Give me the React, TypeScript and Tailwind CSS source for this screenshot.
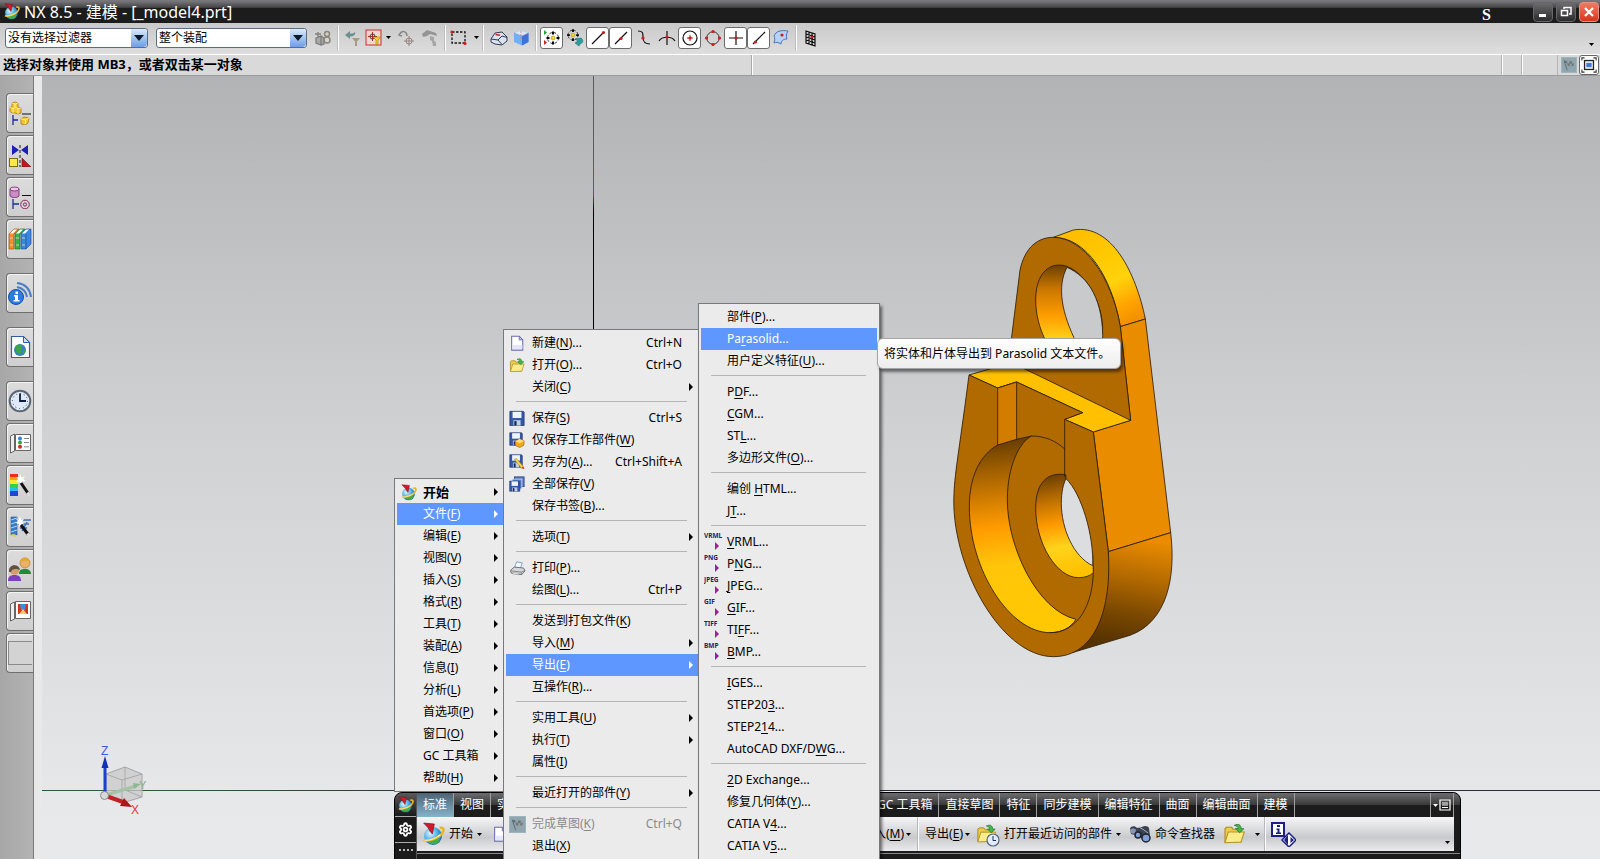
import React from "react";
import { Settings } from "lucide-react";

type Svg = { size?: number; children: React.ReactNode; box?: string };

function Ico({ size = 18, box = "0 0 18 18", children }: Svg) {
  return (
    <svg width={size} height={size} viewBox={box} fill="none" aria-hidden="true" className="shrink-0">
      {children}
    </svg>
  );
}

/* ---------- shared icons ---------- */

function NxLogo({ size = 18 }: { size?: number }) {
  return (
    <Ico size={size}>
      <defs>
        <radialGradient id="nxBall" cx="0.35" cy="0.35" r="0.75">
          <stop offset="0" stopColor="#e4f8ff" />
          <stop offset="0.5" stopColor="#4fb4e6" />
          <stop offset="1" stopColor="#15579f" />
        </radialGradient>
      </defs>
      <circle cx="9" cy="10.500" r="6.700" fill="url(#nxBall)" />
      <path d="M4.500 14.500c2.500 2.500 6 3 8.500 1l1.500-3-4 .3z" fill="#3cae49" />
      <path d="M2 13.500C6 15 15.500 11.500 16.800 6.500c.5-2-1-2.500-2.800-2" stroke="#e9b424" strokeWidth="1.800" />
      <path d="M2.500 13.500C6 14.300 12 12 14.500 9.500" stroke="#fff3b0" strokeWidth=".8" />
      <path d="M2 .8l8 .7-1.500 7.500L6.800 7 5.500 4.500z" fill="#cf1a2c" stroke="#7c0c18" strokeWidth=".5" />
    </Ico>
  );
}

function FolderIcon({ size = 18 }: { size?: number }) {
  return (
    <Ico size={size}>
      <path d="M1.500 15V5l1-1h4l1 1.500h6V15z" fill="#eccb4a" stroke="#a98a20" strokeWidth=".8" />
      <path d="M1.500 15.500l2.500-8h12l-2.500 7.500z" fill="#fbec8a" stroke="#b3942a" strokeWidth=".8" />
      <path d="M8.500 2.500c3-1.500 5-.5 5.200 2.500h2L12.500 8 9.300 5h2c0-1.500-1-2-2.800-2.500z" fill="#46b64a" stroke="#1f7a2c" strokeWidth=".6" />
    </Ico>
  );
}

function Floppy({ extra }: { extra?: "cube" | "pen" | "stack" }) {
  return (
    <Ico size={16}>
      {extra === "stack" && (
        <>
          <rect x="6" y="1" width="11" height="11" fill="#5b7ec4" stroke="#1d2f6b" strokeWidth=".8" />
          <rect x="3.500" y="3.500" width="11" height="11" fill="#5b7ec4" stroke="#dfe6f7" strokeWidth=".8" />
        </>
      )}
      <g transform={extra === "stack" ? "translate(0 5) scale(.72)" : extra ? "scale(.88)" : "translate(0 .5)"}>
        <path d="M1 1h15l1 1v15H1z" fill="#3558a8" stroke="#1b2f66" strokeWidth=".8" />
        <rect x="4" y="1.500" width="10" height="7" fill="#eef4fb" />
        <rect x="5" y="11" width="8" height="6" fill="#c3d0e4" />
        <rect x="6" y="12" width="2.500" height="5" fill="#14275c" />
      </g>
      {extra === "cube" && (
        <>
          <path d="M7 10.500l5-2.500 5 2-.3 5L12 17.500 7 15z" fill="#f6a81c" stroke="#9a6208" strokeWidth=".7" />
          <path d="M7 10.500l5-2.500 5 2-5 2.500z" fill="#ffe17a" />
        </>
      )}
      {extra === "pen" && (
        <>
          <path d="M6 6l2.500-.8L16 14l-2 2z" fill="#ffd93b" stroke="#a57c0e" strokeWidth=".6" />
          <path d="M14 16l2-2 1.500 3z" fill="#d32b1e" />
        </>
      )}
    </Ico>
  );
}

function FlagIcon({ size = 17 }: { size?: number }) {
  return (
    <Ico size={size}>
      <rect x=".5" y=".5" width="17" height="17" fill="#8fa6b0" stroke="#9fb3bb" />
      <path d="M3.500 4l9 1 2.500-1-1 7-2.500 1-6-1z" fill="#96a1a6" />
      <path d="M3.500 4l3 .4.6 2.500-3-.3zM9.500 4.800l3 .2-.3 2.700-2.500-.3zM7 7l2.700.4.2 2.600-2.400-.3zM12.200 7.700l2.300-.7-.4 2.500-2.200.8z" fill="#66737a" />
      <path d="M3.500 4L7 15" stroke="#5a676e" />
    </Ico>
  );
}

function NewDoc() {
  return (
    <Ico size={16}>
      <path d="M3 1.500h8.500l4 4V17H3z" fill="#fff" stroke="#6a6ab4" strokeWidth="1.200" />
      <path d="M11.500 1.500v4h4z" fill="#c9c9ee" stroke="#6a6ab4" />
      <path d="M4 11h11v5H4z" fill="#e4e6fb" />
    </Ico>
  );
}

function Printer() {
  return (
    <Ico size={17}>
      <path d="M6 8l2-6 6 1-2 6z" fill="#f3f9ff" stroke="#5c8db8" strokeWidth=".8" />
      <path d="M1.500 11l4-3.500 10 1 1.500 3-3.500 4-11-1.500z" fill="#d5d7da" stroke="#5f6266" strokeWidth=".9" />
      <path d="M2 11.500l11 1.300 3.500-1.600M13 13v2.500" stroke="#6c6f73" strokeWidth=".8" />
      <path d="M4 13.300l7 .9-.5 1.500-6.500-.9z" fill="#fff" stroke="#777" strokeWidth=".5" />
    </Ico>
  );
}

function Caret({ white }: { white?: boolean }) {
  return (
    <svg width="5" height="3" viewBox="0 0 5 3" aria-hidden="true" className="shrink-0">
      <path d="M0 0h5L2.500 3z" fill={white ? "#fff" : "#000"} />
    </svg>
  );
}

/* ---------- menus ---------- */

type Entry =
  | null
  | { t: string; k?: string; sub?: boolean; on?: boolean; icon?: React.ReactNode; bold?: boolean; off?: boolean };

function Label({ t }: { t: string }) {
  const i = t.indexOf("&");
  if (i < 0) return <span>{t}</span>;
  return (
    <span>
      {t.slice(0, i)}
      <u className="underline-offset-2">{t[i + 1]}</u>
      {t.slice(i + 2)}
    </span>
  );
}

function Menu({ items, label, className }: { items: Entry[]; label: string; className: string }) {
  return (
    <div
      role="menu"
      aria-label={label}
      className={`absolute border border-[#77797d] bg-[#ebebeb] py-0.5 pl-0.5 text-xs leading-[22px] text-black ${className}`}
    >
      {items.map((it, i) =>
        it === null ? (
          <div key={i} role="separator" className="mr-[11px] ml-2.5 h-[9px] pt-[3px]">
            <div className="h-px bg-[#b4b4b4]" />
          </div>
        ) : (
          <button
            key={i}
            role="menuitem"
            type="button"
            disabled={it.off}
            className={`flex h-[22px] w-full items-center text-left whitespace-nowrap ${
              it.on ? "bg-[#5e97ff] text-white" : it.off ? "text-[#8a8a8a]" : ""
            }`}
          >
            <span className="flex w-[26px] shrink-0 items-center pl-[3px]">{it.icon}</span>
            <span className={`flex-1 ${it.bold ? "text-[13px] font-bold" : ""}`}>
              <Label t={it.t} />
            </span>
            {it.k && <span className="mr-4">{it.k}</span>}
            {it.sub && (
              <svg width="4" height="8" viewBox="0 0 4 8" className="mr-[5px]" aria-hidden="true">
                <path d="M0 0l4 4-4 4z" fill={it.on ? "#fff" : "#000"} />
              </svg>
            )}
          </button>
        ),
      )}
    </div>
  );
}

function FmtIcon({ t }: { t: string }) {
  return (
    <svg width="20" height="20" viewBox="0 0 20 20" className="shrink-0" aria-hidden="true">
      <text x="0" y="6" fontSize="6.500" fontWeight="700" fill="#251c70">
        {t}
      </text>
      <path d="M11 10l4 4-4 4z" fill="#9c1f98" />
    </svg>
  );
}

const mainMenu: Entry[] = [
  { t: "开始", sub: true, bold: true, icon: <NxLogo size={17} /> },
  { t: "文件(&F)", sub: true, on: true },
  { t: "编辑(&E)", sub: true },
  { t: "视图(&V)", sub: true },
  { t: "插入(&S)", sub: true },
  { t: "格式(&R)", sub: true },
  { t: "工具(&T)", sub: true },
  { t: "装配(&A)", sub: true },
  { t: "信息(&I)", sub: true },
  { t: "分析(&L)", sub: true },
  { t: "首选项(&P)", sub: true },
  { t: "窗口(&O)", sub: true },
  { t: "GC 工具箱", sub: true },
  { t: "帮助(&H)", sub: true },
];

const fileMenu: Entry[] = [
  { t: "新建(&N)...", k: "Ctrl+N", icon: <NewDoc /> },
  { t: "打开(&O)...", k: "Ctrl+O", icon: <FolderIcon size={17} /> },
  { t: "关闭(&C)", sub: true },
  null,
  { t: "保存(&S)", k: "Ctrl+S", icon: <Floppy /> },
  { t: "仅保存工作部件(&W)", icon: <Floppy extra="cube" /> },
  { t: "另存为(&A)...", k: "Ctrl+Shift+A", icon: <Floppy extra="pen" /> },
  { t: "全部保存(&V)", icon: <Floppy extra="stack" /> },
  { t: "保存书签(&B)..." },
  null,
  { t: "选项(&T)", sub: true },
  null,
  { t: "打印(&P)...", icon: <Printer /> },
  { t: "绘图(&L)...", k: "Ctrl+P" },
  null,
  { t: "发送到打包文件(&K)" },
  { t: "导入(&M)", sub: true },
  { t: "导出(&E)", sub: true, on: true },
  { t: "互操作(&R)..." },
  null,
  { t: "实用工具(&U)", sub: true },
  { t: "执行(&T)", sub: true },
  { t: "属性(&I)" },
  null,
  { t: "最近打开的部件(&Y)", sub: true },
  null,
  { t: "完成草图(&K)", k: "Ctrl+Q", off: true, icon: <FlagIcon /> },
  { t: "退出(&X)" },
];

const exportMenu: Entry[] = [
  { t: "部件(&P)..." },
  { t: "Pa&rasolid...", on: true },
  { t: "用户定义特征(&U)..." },
  null,
  { t: "P&DF..." },
  { t: "&CGM..." },
  { t: "ST&L..." },
  { t: "多边形文件(&O)..." },
  null,
  { t: "编创 &HTML..." },
  { t: "J&T..." },
  null,
  { t: "&VRML...", icon: <FmtIcon t="VRML" /> },
  { t: "P&NG...", icon: <FmtIcon t="PNG" /> },
  { t: "&JPEG...", icon: <FmtIcon t="JPEG" /> },
  { t: "&GIF...", icon: <FmtIcon t="GIF" /> },
  { t: "TI&FF...", icon: <FmtIcon t="TIFF" /> },
  { t: "&BMP...", icon: <FmtIcon t="BMP" /> },
  null,
  { t: "&IGES..." },
  { t: "STEP20&3..." },
  { t: "STEP2&14..." },
  { t: "AutoCAD DXF/D&WG..." },
  null,
  { t: "&2D Exchange..." },
  { t: "修复几何体(&Y)..." },
  { t: "CATIA V&4..." },
  { t: "CATIA V&5..." },
];

/* ---------- title bar and toolbars ---------- */

function TitleBar() {
  return (
    <header className="flex h-[23px] shrink-0 items-center bg-linear-to-b from-[#77777b] from-5% via-[#454548] via-32% to-[#1c1c1c] to-36% pl-[3px] text-white">
      <NxLogo size={17} />
      <h1 className="ml-1 flex-1 text-base leading-[22px]">NX 8.5 - 建模 - [_model4.prt]</h1>
      <span className="mt-1.5 mr-[42px] font-['Liberation_Serif',serif] text-base leading-none font-bold">S</span>
      <div className="flex gap-[3px] pr-px">
        <button type="button" aria-label="最小化" className="flex h-5 w-5 items-center justify-center rounded-sm border border-[#66666a] bg-linear-to-b from-[#6d6d70] to-[#2c2c2e]">
          <Ico size={14} box="0 0 14 14"><path d="M3 9h7v3H3z" fill="#fff" /></Ico>
        </button>
        <button type="button" aria-label="还原" className="flex h-5 w-5 items-center justify-center rounded-sm border border-[#66666a] bg-linear-to-b from-[#6d6d70] to-[#2c2c2e]">
          <Ico size={14} box="0 0 14 14"><path d="M5 4V2.500h7V9h-2M2.500 5.500h6v5h-6z" stroke="#fff" strokeWidth="1.500" /></Ico>
        </button>
        <button type="button" aria-label="关闭" className="flex h-5 w-5 items-center justify-center rounded-sm border border-[#e8927e] bg-linear-to-b from-[#ee7b62] to-[#d8321a]">
          <Ico size={14} box="0 0 14 14"><path d="M3 3l8 8M11 3l-8 8" stroke="#fff" strokeWidth="2.200" /></Ico>
        </button>
      </div>
    </header>
  );
}

function Combo({ value, label, className }: { value: string; label: string; className: string }) {
  return (
    <div className={`relative h-5 ${className}`}>
      <select aria-label={label} className="block h-full w-full appearance-none rounded-[3px] border border-[#5c6d80] bg-white pl-0.5 text-xs leading-[18px] text-black">
        <option>{value}</option>
      </select>
      <span className="pointer-events-none absolute top-px right-px bottom-px flex w-4 items-center justify-center rounded-r-sm bg-linear-to-b from-[#dbe9fb] to-[#6a9fe6]">
        <svg width="10" height="6" viewBox="0 0 10 6" aria-hidden="true"><path d="M0 0h10L5 6z" fill="#0e1a2c" /></svg>
      </span>
    </div>
  );
}

function Sep() {
  return <div className="mx-[3px] h-[26px] w-0.5 shrink-0 border-l border-[#bdbdbd] bg-white" />;
}

function Tool({ label, boxed, w, children }: { label: string; boxed?: boolean; w?: string; children: React.ReactNode }) {
  return (
    <button
      type="button"
      aria-label={label}
      className={`flex h-[22px] shrink-0 items-center justify-center ${w ?? "w-[23px]"} ${
        boxed ? "rounded-[3px] border border-[#6c6c6c] bg-white" : ""
      }`}
    >
      {children}
    </button>
  );
}

function Dots({ pts }: { pts: number[][] }) {
  return (
    <>
      {pts.map(([x, y]) => (
        <circle key={`${x}-${y}`} cx={x} cy={y} r="1.600" fill="#cc1c1c" />
      ))}
    </>
  );
}

function Flower() {
  return (
    <>
      <circle cx="10" cy="9" r="5.500" stroke="#222" strokeDasharray="2.500 1.800" />
      <path d="M10 2.500v3M10 12.500v3M3.500 9h3M13.500 9h3" stroke="#000" strokeWidth="2" />
      <circle cx="10" cy="9" r="2" fill="#f5d728" stroke="#a88d0c" strokeWidth=".6" />
    </>
  );
}

function Toolbar() {
  return (
    <div className="flex h-[31px] shrink-0 items-center bg-linear-to-b from-[#c9c9c9] to-[#dedede] pb-0.5 pl-[5px]">
      <Combo value="没有选择过滤器" label="类型过滤器" className="mr-2 w-[143px]" />
      <Combo value="整个装配" label="选择范围" className="mr-1 w-[151px]" />
      <Tool label="装配过滤">
        <Ico>
          <path d="M2 9l5-2v9l-5-2zM7 7l3 2v6l-3 1M4 3v5M1 5h6" stroke="#7d7d7d" strokeWidth="1.300" fill="#a8a8a8" />
          <circle cx="13" cy="5" r="2.500" stroke="#8b8675" strokeWidth="1.500" />
          <circle cx="13" cy="11" r="3" stroke="#8b8675" strokeWidth="1.500" />
        </Ico>
      </Tool>
      <Sep />
      <Tool label="重置过滤器" w="w-[22px]">
        <Ico>
          <path d="M1 6l5-4v2.500c3 0 4 0 5-2 1 4-2 5-5 5V10z" fill="#6d9090" />
          <path d="M8 9h8l-3 3.500V17h-2v-4.500z" fill="#a39c80" />
        </Ico>
      </Tool>
      <Tool label="点过滤器" w="w-5">
        <Ico>
          <rect x="1" y="1" width="15" height="15" fill="#eed8cc" stroke="#cf2a2a" />
          <path d="M7.500 3v9M3 7.500h9" stroke="#b02828" />
          <circle cx="7.500" cy="7.500" r="2.500" stroke="#444" />
          <path d="M8 8h8l-3 3v4l-2 1v-5z" fill="#f7ce2d" stroke="#9f7c0b" strokeWidth=".6" />
        </Ico>
      </Tool>
      <span className="mr-1 ml-0.5"><Caret /></span>
      <Tool label="移动点">
        <Ico>
          <path d="M3 3l-2 3 3 1M2 5c2-4 7-3 7 2" stroke="#868686" strokeWidth="1.500" />
          <circle cx="11" cy="12" r="3" stroke="#968484" />
          <path d="M11 7v10M6 12h10" stroke="#968484" />
        </Ico>
      </Tool>
      <Tool label="锤子">
        <Ico>
          <path d="M1 5l5-4 9 3 1 3-3-1-4-1-3 2-4 1z" fill="#949494" />
          <path d="M9 7l4 1v4l2 1v4h-3l-1-5-2-1z" fill="#a5a5a5" />
        </Ico>
      </Tool>
      <Sep />
      <Tool label="矩形选择" w="w-5">
        <Ico>
          <rect x="2" y="3" width="13" height="11" stroke="#111" strokeWidth="1.300" strokeDasharray="2.500 1.500" />
          <Dots pts={[[2, 3], [15, 14.5]]} />
        </Ico>
      </Tool>
      <span className="ml-[5px]"><Caret /></span>
      <Sep />
      <Tool label="显示隐藏边">
        <Ico>
          <path d="M1 10l4-6 7-1 5 5v4l-5 4-7-1-4-2z" fill="#dbe2f0" stroke="#333a55" />
          <path d="M1 10l7 1 4 4.500M8 11l4-4 5 1.500" stroke="#333a55" />
          <path d="M5.500 5.500l4.500.8" stroke="#d32222" strokeWidth="1.500" />
        </Ico>
      </Tool>
      <Tool label="着色体" w="w-[22px]">
        <Ico>
          <path d="M2 4l7-2.500L16.500 4v9L10 16.500 2 13z" fill="#6fb0f6" />
          <path d="M2 4l7-2.500L16.500 4 10 7z" fill="#d6e8fc" />
          <path d="M10 7l6.500-3v9L10 16.500z" fill="#3a72e0" />
          <path d="M9 2v8M2 4l8 3 6.500-3" stroke="#d67a7a" strokeWidth=".8" strokeDasharray="2 1" />
        </Ico>
      </Tool>
      <Sep />
      <Tool label="启用捕捉" boxed>
        <Ico><Flower /><path d="M1 1l3 2.500-3 2.500z" fill="#1ea832" /><path d="M1 11l3 2.500-3 2.500z" fill="#d32121" /></Ico>
      </Tool>
      <Tool label="清除捕捉">
        <Ico>
          <g transform="translate(-2 -2) scale(.9)"><Flower /></g>
          <path d="M9 10l6-1c3 2 2 5-1 6l-1 2-4-3 3-2z" fill="#2c9c9c" stroke="#166" strokeWidth=".5" />
        </Ico>
      </Tool>
      <Tool label="端点" boxed>
        <Ico><path d="M3 15L14 4" stroke="#111" strokeWidth="1.200" /><Dots pts={[[14.5, 3.5]]} /></Ico>
      </Tool>
      <Tool label="中点" boxed>
        <Ico><path d="M3 15L15 3" stroke="#111" strokeWidth="1.200" /><Dots pts={[[9, 9.5]]} /></Ico>
      </Tool>
      <Tool label="控制点">
        <Ico><path d="M3 2c5 0 5 2 5 6s1 7 7 7" stroke="#111" strokeWidth="1.200" /><Dots pts={[[8, 9]]} /></Ico>
      </Tool>
      <Tool label="交点">
        <Ico><path d="M1 12c3-5 13-5 16 0M9 2v14" stroke="#111" strokeWidth="1.200" /><Dots pts={[[9, 8]]} /></Ico>
      </Tool>
      <Tool label="圆弧中心" boxed>
        <Ico><circle cx="9" cy="9" r="7" stroke="#111" strokeWidth="1.200" /><path d="M6 9h6M9 6v6" stroke="#cc1c1c" /><Dots pts={[[9, 9]]} /></Ico>
      </Tool>
      <Tool label="象限点">
        <Ico><circle cx="9" cy="9" r="6.200" stroke="#333" /><Dots pts={[[9, 2.5], [9, 15.5], [2.5, 9], [15.5, 9]]} /></Ico>
      </Tool>
      <Tool label="现有点" boxed>
        <Ico><path d="M9 2v14M2 9h14" stroke="#111" strokeWidth="1.200" /><Dots pts={[[9, 9]]} /></Ico>
      </Tool>
      <Tool label="曲线上的点" boxed>
        <Ico><path d="M3 15L15 3" stroke="#111" strokeWidth="1.200" /><Dots pts={[[5.5, 13]]} /></Ico>
      </Tool>
      <Tool label="面上的点" w="w-[22px]">
        <Ico>
          <path d="M2 7c2-5 7-6 14-5-2 3-2 5-1 8-4 0-6 2-6 5-3-2-5-2-7-1 1-3 1-5 0-7z" fill="#b5d3f8" stroke="#4676b8" />
          <Dots pts={[[10, 6]]} />
        </Ico>
      </Tool>
      <Sep />
      <Tool label="栅格点" w="w-[22px]">
        <Ico>
          <path d="M4 2l9 3v12l-9-3zM7 3v12M10 4v12M4 5l9 3M4 8l9 3M4 11l9 3" stroke="#111" strokeWidth="1.200" />
          <Dots pts={[[10, 8]]} />
        </Ico>
      </Tool>
      <span className="mt-3.5 mr-1.5 ml-auto"><Caret /></span>
    </div>
  );
}

function PromptBar() {
  return (
    <div className="flex h-[22px] shrink-0 items-stretch border-t border-b border-t-white border-b-[#9c9c9c] bg-[#d9d9d9] text-[13px] font-bold text-black">
      <p className="w-[47%] shrink-0 border-r border-[#a8a8a8] pl-[3px] leading-[18px]">选择对象并使用 MB3，或者双击某一对象</p>
      <div className="flex-1 border-r border-l border-r-[#b5b5b5] border-l-white" />
      <div className="w-5 border-r border-l border-r-[#b5b5b5] border-l-white" />
      <div className="w-9 border-r border-l border-r-[#b5b5b5] border-l-white" />
      <div className="flex items-center gap-0.5 pr-px pl-[3px]">
        <FlagIcon size={16} />
        <button type="button" aria-label="全屏" className="flex h-5 w-5 items-center justify-center rounded-[3px] border border-[#666] bg-white">
          <Ico size={16}>
            <path d="M1 4V1h3M14 1h3v3M1 14v3h3M17 14v3h-3" stroke="#333" strokeWidth="1.200" />
            <rect x="4" y="4" width="10" height="10" fill="#fff" stroke="#222" strokeWidth="1.500" />
            <rect x="6" y="6.500" width="6" height="5" fill="#3a7ad8" />
          </Ico>
        </button>
      </div>
    </div>
  );
}

/* ---------- resource rail ---------- */

const treeBlue = "#1e2a9c";

const rail: { label: string; gap?: boolean; icon: React.ReactNode }[] = [
  {
    label: "装配导航器",
    icon: (
      <>
        <path d="M4 2l3-1 3 1v4l3 1v5l-3 1-3-1-4-.5-1-1V6.500l2-1z" fill="#f5c52f" stroke="#a87c09" strokeWidth=".8" />
        <path d="M4 2l3 1.200L10 2M7 3.200V6M2 6.500l3 1 3-1 2 1.200L13 7M5 7.500V12M10 7.700V13" stroke="#fff3a0" strokeWidth=".9" />
        <path d="M5 14v10M5 19h5" stroke={treeBlue} strokeWidth="1.300" />
        <path d="M14 13h9" stroke="#111" />
        <path d="M13 18l3-2 5 1-1 5-3 2-4-1z" fill="#f5c52f" stroke="#a87c09" strokeWidth=".8" />
        <path d="M13 18l4.500.8 3.500-1.800M17.500 18.800V23" stroke="#fff3a0" strokeWidth=".9" />
      </>
    ),
  },
  {
    label: "约束导航器",
    icon: (
      <>
        <path d="M4 2l7 5-7 5zM20 2l-7 5 7 5z" fill="#1d1fb8" />
        <path d="M12 2v22" stroke="#111" strokeDasharray="3 2" />
        <rect x="1.500" y="15.500" width="8" height="8" fill="#ffe948" stroke="#7c6c0c" />
        <path d="M14 15l9 9h-9z" fill="#c5161d" stroke="#651014" strokeWidth=".6" />
      </>
    ),
  },
  {
    label: "部件导航器",
    icon: (
      <>
        <path d="M2 4v7c2 2 7 2 9 0V4z" fill="#cb8ec4" stroke="#7a2f72" strokeWidth=".9" />
        <ellipse cx="6.500" cy="4" rx="4.500" ry="2" fill="#ecc8e8" stroke="#7a2f72" strokeWidth=".9" />
        <path d="M5 14v10M5 19h6" stroke={treeBlue} strokeWidth="1.300" />
        <path d="M14 10.500h9" stroke="#111" strokeWidth="1.200" />
        <circle cx="17" cy="19.500" r="4.300" stroke="#8a2a62" />
        <circle cx="17" cy="19.500" r="1.600" stroke="#8a2a62" />
      </>
    ),
  },
  {
    label: "重用库",
    icon: (
      <>
        <path d="M1 7l5-5h5L6 7v15H1z" fill="#ef8f2c" stroke="#964c0a" strokeWidth=".6" />
        <path d="M7 7l5-5h5l-5 5v15H7z" fill="#37b34a" stroke="#136622" strokeWidth=".6" />
        <path d="M13 7l5-5h5v15l-5 5h-5z" fill="#3b86e0" stroke="#174b91" strokeWidth=".6" />
        <path d="M2 6.500l4-4h3L5 6.500zM8 6.500l4-4h3l-4 4zM14 6.500l4-4h3l-4 4z" fill="#fff" />
        <path d="M2 11h3M8 11h3M14 11h3M2 18h3M8 18h3M14 18h3" stroke="#f6dfa8" strokeWidth=".8" />
        <path d="M18 7v15" stroke="#174b91" strokeWidth=".6" />
      </>
    ),
  },
  {
    label: "HD3D 工具",
    gap: true,
    icon: (
      <>
        <path d="M9 2c8 1 13 6 14 14M9 6c5 1 9 4 10 10M10 10c3 1 4 3 5 6" stroke="#4a7ec8" strokeWidth="2" />
        <circle cx="8" cy="16" r="7.500" fill="#2b7de0" stroke="#1a4fa3" />
        <path d="M7.500 10.500h2.500v2.500H7.500zM6 14h4v5h1.500v1.500h-6V19H7v-3.500H6z" fill="#fff" />
      </>
    ),
  },
  {
    label: "浏览器",
    gap: true,
    icon: (
      <>
        <path d="M3.500 1.500h12l6 6v15h-18z" fill="#fff" stroke="#2d5fae" strokeWidth="1.200" />
        <path d="M15.500 1.500v6h6z" fill="#cfdff5" stroke="#2d5fae" />
        <circle cx="12" cy="15" r="6" fill="#3c7ec2" />
        <path d="M8 11c2-2 5-2 6 0s-2 3-1 5-2 4-3 3-4-5-2-8zM15 15l3-1-1 4-2 1z" fill="#3aa648" />
      </>
    ),
  },
  {
    label: "历史记录",
    gap: true,
    icon: (
      <>
        <circle cx="12" cy="12" r="10.300" fill="#dfe9f8" stroke="#5d6875" strokeWidth="2" />
        <circle cx="12" cy="12" r="7.500" stroke="#3c4654" strokeDasharray="1 2.900" />
        <path d="M12 4.500V12h6" stroke="#0d1c3c" strokeWidth="1.800" />
      </>
    ),
  },
  {
    label: "系统材料",
    icon: (
      <>
        <path d="M2.500 5l4-2v17l-4 2z" fill="#eee" stroke="#666" />
        <path d="M7.500 3.500h15v16h-15z" fill="#fff" stroke="#666" />
        <circle cx="12" cy="7.500" r="2" fill="#2f83e0" />
        <circle cx="12" cy="11.500" r="2" fill="#35a844" />
        <circle cx="12" cy="15.800" r="2" fill="#d82a20" />
        <path d="M16 7.500h5M16 11.500h5M16 15.800h5" stroke="#888" />
      </>
    ),
  },
  {
    label: "加工向导",
    icon: (
      <>
        <path d="M2 1h8v4H2z" fill="#f02c16" />
        <path d="M2 4h8v4H2z" fill="#fb9f13" />
        <path d="M2 7h8v4H2z" fill="#f5ee2d" />
        <path d="M2 11h8v4H2z" fill="#35d04a" />
        <path d="M2 15h8v4H2z" fill="#23bff0" />
        <path d="M2 18h8v5H2z" fill="#2440dd" />
        <path d="M12 1l1.500 3.500L17 3l-2 3 3 2-4 .5-1 3.500-1.500-3.500L8 9l2-3-2-2 3.500.5z" fill="#fff" />
        <path d="M13 10l7.500 11" stroke="#111" strokeWidth="3" />
        <path d="M19.500 19.500l2 3" stroke="#ddd" strokeWidth="3" />
      </>
    ),
  },
  {
    label: "分析向导",
    icon: (
      <>
        <path d="M3 2h6v18H3z" fill="#3a7cc4" stroke="#245189" strokeWidth=".6" />
        <path d="M9 5h14M10 9h11M12 13h7M14 16l5-9" stroke="#3f74b8" strokeWidth="1.500" />
        <path d="M3 5l6-2M3 9l6-2M3 13l6-2M3 17l6-2" stroke="#b8d4f4" />
        <path d="M1 20l5-1 4 2-3 1z" fill="#e0cf62" />
        <path d="M12 1l1 3.500 3-.5-2 3 2 2-3 .5-1 2.500-1.500-3L8 8l2-2-2-2 3 .5z" fill="#fff" />
        <path d="M13 10l7.500 10" stroke="#111" strokeWidth="3" />
        <path d="M19.500 18.500l2 3" stroke="#ddd" strokeWidth="3" />
      </>
    ),
  },
  {
    label: "角色",
    icon: (
      <>
        <path d="M11 17c0-4 2-5 6-5s6 2 6 5z" fill="#1e8a3a" />
        <circle cx="17" cy="6" r="5" fill="#eab268" stroke="#b87a2c" strokeWidth=".7" />
        <path d="M12 5c0-5 9-6 10 0-3-2-6-1-10 0z" fill="#e2a82a" />
        <path d="M0 24c0-4 2-6 6.500-6s6.500 2 6.500 6z" fill="#7d3fbf" />
        <circle cx="6.500" cy="13" r="4.800" fill="#d99a6c" />
        <path d="M1 15c-1-8 10-9 11-2l-3-1c-3 0-5 0-6 3z" fill="#5f5242" />
      </>
    ),
  },
  {
    label: "系统场景",
    icon: (
      <>
        <path d="M2.500 5l4-2v17l-4 2z" fill="#eee" stroke="#666" />
        <path d="M7.500 2.500h15v17h-15z" fill="#fff" stroke="#666" />
        <path d="M10 5h10v10H10z" fill="#d8301e" />
        <path d="M12 5h6l-1 6h-4z" fill="#3d8ae0" />
        <path d="M11 15l4-5 4 5z" fill="#f7c86c" />
      </>
    ),
  },
  { label: "空白", icon: <rect x=".5" y=".5" width="26" height="23" fill="#d3d3d3" stroke="#8a8a8a" /> },
];

function Rail() {
  return (
    <nav aria-label="资源条" className="flex w-[33px] shrink-0 flex-col gap-0.5 bg-linear-to-r from-[#a7a7a7] to-[#b3b3b3] pt-[17px] pl-1.5">
      {rail.map((r) => (
        <button
          key={r.label}
          type="button"
          aria-label={r.label}
          className={`flex h-10 w-full items-center overflow-hidden rounded-l-[4px] border border-r-0 border-[#6f6f6f] bg-linear-to-b from-[#dcdcdc] to-[#cfcfcf] pl-px shadow-[inset_1px_1px_0_#f4f4f4] ${
            r.gap ? "mt-3" : ""
          }`}
        >
          <Ico size={24} box="0 0 24 24">{r.icon}</Ico>
        </button>
      ))}
    </nav>
  );
}

/* ---------- graphics window ---------- */

function Part() {
  const edge = { stroke: "#2c1c06", strokeWidth: 2.5, strokeLinejoin: "round" as const };
  return (
    <svg width="270" height="460" viewBox="0 0 810 1380" className="absolute top-[134px] left-[888px]" role="img" aria-label="零件模型">
      <defs>
        <linearGradient id="lug" gradientUnits="userSpaceOnUse" x1="480" y1="60" x2="620" y2="340">
          <stop offset="0" stopColor="#ffbf00" />
          <stop offset="0.25" stopColor="#ffc800" />
          <stop offset="0.55" stopColor="#ffd20c" />
          <stop offset="0.8" stopColor="#ffa200" />
          <stop offset="1" stopColor="#ee8d00" />
        </linearGradient>
        <linearGradient id="foot" gradientUnits="userSpaceOnUse" x1="650" y1="990" x2="590" y2="1310">
          <stop offset="0" stopColor="#ea8b00" />
          <stop offset="0.35" stopColor="#b56b00" />
          <stop offset="0.7" stopColor="#7a4800" />
          <stop offset="1" stopColor="#553200" />
        </linearGradient>
        <linearGradient id="holeA" gradientUnits="userSpaceOnUse" x1="0" y1="165" x2="0" y2="400">
          <stop offset="0" stopColor="#6b4000" />
          <stop offset="0.3" stopColor="#c87600" />
          <stop offset="0.65" stopColor="#ff9d00" />
          <stop offset="0.95" stopColor="#ffd21a" />
        </linearGradient>
        <linearGradient id="bore" gradientUnits="userSpaceOnUse" x1="200" y1="680" x2="270" y2="1270">
          <stop offset="0" stopColor="#5f3900" />
          <stop offset="0.18" stopColor="#a56200" />
          <stop offset="0.45" stopColor="#ff9a00" />
          <stop offset="0.65" stopColor="#ffc60a" />
          <stop offset="1" stopColor="#ffc800" />
        </linearGradient>
        <linearGradient id="holeB" gradientUnits="userSpaceOnUse" x1="340" y1="790" x2="400" y2="1100">
          <stop offset="0" stopColor="#5f3900" />
          <stop offset="0.25" stopColor="#b86c00" />
          <stop offset="0.5" stopColor="#ff9a00" />
          <stop offset="0.72" stopColor="#ffd31c" />
          <stop offset="1" stopColor="#ffc000" />
        </linearGradient>
      </defs>
      <path d="M370 82L430 60C545 40 618 190 646 327L571 350C545 200 470 82 370 82Z" fill="url(#lug)" {...edge} />
      <path d="M571 350L646 327L722 968L535 1025L490 666L602 631Z" fill="#ea8c00" {...edge} />
      <path d="M535 1025L722 968C738 1100 712 1235 600 1276L430 1327L370 1330C500 1340 540 1180 535 1025Z" fill="url(#foot)" {...edge} />
      <path d="M270 180C285 110 325 82 370 82C460 82 545 200 571 350L602 631L230 500Z" fill="#b06a00" {...edge} />
      <path d="M388 165C345 165 317 205 317 270C317 350 360 440 410 460C480 460 518 430 518 350C512 250 445 165 388 165Z" fill="url(#holeA)" {...edge} />
      <path d="M411 172C475 200 522 270 518 400L440 400C395 310 380 230 411 172Z" fill="#c9cacc" {...edge} />
      <path d="M117 495L203 470H270L602 631L490 666L404 628L458 608L260 516L203 534Z" fill="#ffc000" {...edge} />
      <path d="M117 495L203 534L260 516L458 608L404 628L490 666L535 1025C545 1190 500 1340 370 1340C210 1340 60 1060 72 850C74 790 92 690 117 495Z" fill="#b06a00" {...edge} />
      <path d="M203 534L260 516V692L203 707Z" fill="#d27c00" {...edge} />
      <path d="M203 705C150 735 118 800 118 890C118 1080 240 1268 360 1268C395 1268 420 1255 438 1228C320 1200 232 1010 232 870C232 765 270 695 305 678L260 688Z" fill="url(#bore)" {...edge} />
      <path d="M305 678C342 678 378 692 404 717M360 1268C440 1268 492 1190 490 1070" {...edge} fill="none" />
      <path d="M407 794C350 785 317 820 317 895C317 1000 380 1103 445 1103C465 1103 480 1098 490 1088L488 1030L408 806Z" fill="url(#holeB)" {...edge} />
      <path d="M408 806C455 850 492 980 488 1067C430 1040 394 955 394 880C394 845 400 822 408 806Z" fill="#dcdddf" {...edge} />
      <path d="M404 628V800" {...edge} />
    </svg>
  );
}

function Triad() {
  return (
    <svg width="60" height="80" viewBox="0 -8 60 80" className="absolute bottom-[41px] left-[50px] font-['Liberation_Sans',sans-serif]" aria-hidden="true">
      <path d="M14 28l19-7 17 7v23l-20 6-16-7z" fill="#c9cacb" fillOpacity=".75" stroke="#a4a5a6" />
      <path d="M14 28l16 6v23M30 34l20-6M33 21v23l17 7M33 44l-19 6" stroke="#a9aaab" fill="none" />
      <path d="M14 49l30-9" stroke="#a3c4a5" strokeWidth="3" />
      <path d="M41 37l8 1-7 5z" fill="#8fb892" />
      <path d="M13 47V18" stroke="#1c3fd0" strokeWidth="3" />
      <path d="M9.500 22L13 10l3.500 12z" fill="#1230b8" />
      <path d="M14 50l17 6" stroke="#c02323" strokeWidth="4" />
      <path d="M32 52l8 9-12-1z" fill="#a81818" />
      <circle cx="12.500" cy="49.500" r="4" fill="#d9d9d9" stroke="#8c8c8c" />
      <text x="9" y="9" fontSize="12" fill="#3a5cf0">Z</text>
      <text x="47" y="43" fontSize="11" fill="#83b088">Y</text>
      <text x="39" y="68" fontSize="12" fill="#e03b3b">X</text>
    </svg>
  );
}

/* ---------- floating command dock ---------- */

function DockTab({ t, on }: { t: string; on?: boolean }) {
  return (
    <button
      type="button"
      role="tab"
      aria-selected={!!on}
      className={`h-full shrink-0 border-r border-[#a0a0a0] px-1.5 whitespace-nowrap ${
        on ? "bg-linear-to-b from-[#4d6374] to-[#86b4cb]" : ""
      }`}
    >
      {t}
    </button>
  );
}

function DockSep() {
  return <div className="h-full w-0.5 shrink-0 border-l border-[#b8b8bb] bg-white" />;
}

function Dock() {
  return (
    <section className="absolute top-[716px] left-[352px] flex h-[70px] w-[1067px] overflow-hidden rounded-t-lg border border-black bg-[#1b1b1b] text-xs text-white">
      <div className="flex w-[22px] shrink-0 flex-col border-r border-[#555]">
        <div className="flex h-6 items-center justify-center border-b border-[#aaa] bg-linear-to-b from-[#5a5a5a] to-[#1b1b1b]">
          <NxLogo size={17} />
        </div>
        <button type="button" aria-label="设置" className="flex h-[26px] items-center justify-center border-b border-[#aaa]">
          <Settings size={15} strokeWidth={3} color="#fff" />
        </button>
        <span className="flex justify-center gap-0.5 pt-1.5" aria-hidden="true">
          <i className="h-0.5 w-0.5 bg-[#bbb]" />
          <i className="h-0.5 w-0.5 bg-[#bbb]" />
          <i className="h-0.5 w-0.5 bg-[#bbb]" />
          <i className="h-0.5 w-0.5 bg-[#bbb]" />
        </span>
      </div>
      <div className="flex min-w-0 flex-1 flex-col">
        <div role="tablist" className="flex h-6 shrink-0 items-center bg-linear-to-b from-[#68686b] from-5% via-[#3b3b3c] via-48% to-[#1c1c1c] to-52% pr-1.5">
          <div className="flex h-full w-[454px] shrink-0 overflow-hidden">
            <DockTab t="标准" on />
            <DockTab t="视图" />
            <DockTab t="实用工具" />
          </div>
          <div className="flex h-full flex-1">
            {["GC 工具箱", "直接草图", "特征", "同步建模", "编辑特征", "曲面", "编辑曲面", "建模"].map((t) => (
              <DockTab key={t} t={t} />
            ))}
          </div>
          <button type="button" aria-label="选项卡菜单" className="flex h-full w-6 items-center justify-center gap-px border-x border-[#a0a0a0]">
            <Caret white />
            <Ico size={12} box="0 0 12 12"><path d="M1 1h10v10H1zM3 4h6M3 6h6M3 8.500h6" stroke="#fff" strokeWidth="1.200" /></Ico>
          </button>
        </div>
        <div className="mr-1.5 flex h-[34px] shrink-0 items-center bg-linear-to-b from-[#f6f6f8] via-[#c9cacd] via-60% to-[#ececef] text-black">
          <div className="flex w-[457px] shrink-0 items-center overflow-hidden pl-1">
            <NxLogo size={24} />
            <span className="mr-1 ml-1">开始</span>
            <Caret />
            <span className="ml-2.5"><NewDoc /></span>
          </div>
          <span className="mr-0.5"><Label t="入(&M)" /></span>
          <Caret />
          <span className="mr-1.5 ml-1.5 h-full"><DockSep /></span>
          <span className="mr-0.5"><Label t="导出(&E)" /></span>
          <Caret />
          <span className="relative ml-1.5">
            <FolderIcon size={22} />
            <span className="absolute top-2.5 left-2.5">
              <Ico size={14} box="0 0 14 14"><circle cx="7" cy="7" r="6" fill="#e3ecf8" stroke="#55657c" strokeWidth="1.200" /><path d="M7 3v4.500h3" stroke="#14306a" /></Ico>
            </span>
          </span>
          <span className="mr-1 ml-1.5">打开最近访问的部件</span>
          <Caret />
          <span className="ml-2">
            <Ico size={22} box="0 0 22 22">
              <path d="M1 6c0-3 5-4 7-1l5-1c3-2 6-1 7 1l1 8-2 4-4 1-3-3-1-5-5 2-4-1z" fill="#3b4250" />
              <path d="M1 7c1-2 5-2 6 0l-1 4-4-1z" fill="#8a97b4" />
              <circle cx="17" cy="15" r="4" fill="#7f9fd8" stroke="#20242e" strokeWidth="1.500" />
              <circle cx="9" cy="12" r="3" fill="#7f9fd8" stroke="#20242e" strokeWidth="1.500" />
              <path d="M10 4l5 3 4 3" stroke="#a8b2c8" />
            </Ico>
          </span>
          <span className="mr-2 ml-1">命令查找器</span>
          <FolderIcon size={24} />
          <span className="mr-1 ml-2"><Caret /></span>
          <span className="mr-[5px] h-full"><DockSep /></span>
          <Ico size={25} box="0 0 25 25">
            <rect x="1" y="1" width="12" height="13" fill="#fff" stroke="#1c1f86" strokeWidth="2" />
            <path d="M6 3h3v2H6zM5.500 6.500h3v4h1.500V12H5v-1.500h1.500V8h-1z" fill="#1c1f86" />
            <path d="M18 11l7 7-7 7-7-7z" fill="#fff" stroke="#1c1f86" strokeWidth="1.500" />
            <path d="M17 13v10l-4-5zM19.500 15l3.500 3-3.500 3z" fill="#1c1f86" />
          </Ico>
          <span className="mt-4 mr-1 ml-auto"><Caret /></span>
        </div>
        <div className="mt-0.5 h-px bg-[#888]" />
      </div>
    </section>
  );
}

function Canvas() {
  return (
    <main className="relative min-w-0 flex-1 overflow-hidden bg-linear-to-b from-[#b2b3b5] via-[#d0d1d3] via-45% to-[#e8e9ea] to-95%">
      <div className="absolute top-0 left-[551px] h-[259px] w-px bg-linear-to-b from-[#5c5c5c] from-33% via-[#a83a2e] via-46% to-black to-54%" />
      <div className="absolute top-[714px] right-0 left-0 h-px bg-linear-to-r from-[#2f5a35] from-10% to-[#2c2c38] to-30%" />
      <Triad />
      <Part />
      <Dock />
      <Menu label="菜单" items={mainMenu} className="top-[402px] left-[352px] w-[110px]" />
      <Menu label="文件" items={fileMenu} className="top-[253px] left-[461px] w-[196px]" />
      <Menu label="导出" items={exportMenu} className="top-[227px] left-[656px] w-[182px] pr-0.5 shadow-[2px_3px_3px_rgba(0,0,0,0.55)]" />
      <div role="tooltip" className="absolute top-[262px] left-[835px] rounded-md border border-[#a5a5a5] bg-linear-to-b from-white to-[#ededee] pr-2.5 pl-1.5 text-xs leading-[29px] whitespace-nowrap text-black shadow-[2px_3px_3px_rgba(0,0,0,0.5)]">
        将实体和片体导出到 Parasolid 文本文件。
      </div>
    </main>
  );
}

export default function App() {
  return (
    <div className="flex h-screen flex-col overflow-hidden bg-[#d9d9d9] font-['Noto_Sans','Noto_Sans_CJK_SC',sans-serif]">
      <TitleBar />
      <Toolbar />
      <PromptBar />
      <div className="flex min-h-0 flex-1">
        <Rail />
        <div className="w-[9px] shrink-0 border-l border-[#777] bg-[#e9e9ea]" />
        <Canvas />
      </div>
    </div>
  );
}
